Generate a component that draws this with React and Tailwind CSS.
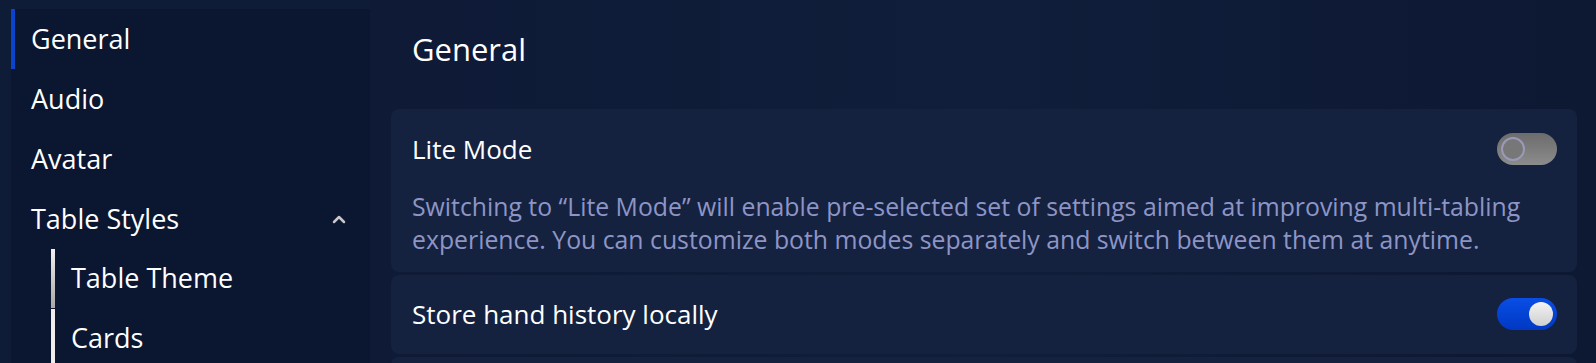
import { useState } from 'react';

const font = { fontFamily: '"Open Sans", "Noto Sans", sans-serif' };

function Toggle({ on }) {
    return (
        <div
            className={
                'relative h-[32px] w-[60px] shrink-0 rounded-full ' +
                (on ? 'bg-gradient-to-b from-[#0a4ee6] to-[#0038c2]' : 'bg-gradient-to-b from-[#6c6c6c] to-[#8c8c8c]')
            }
        >
            {on ? (
                <div className="absolute right-[4px] top-[4px] h-[24px] w-[24px] rounded-full bg-gradient-to-b from-[#f4f4f4] to-[#cfcfcf]" />
            ) : (
                <div className="absolute left-[4px] top-[4px] h-[24px] w-[24px] rounded-full border-2 border-[#9a9ab8] bg-[#777]" />
            )}
        </div>
    );
}

function NavItem({ label, active, children }) {
    return (
        <div
            className={
                'flex h-[60px] items-center border-l-4 pl-[16px] pr-[24px] text-[27px] text-white ' +
                (active ? 'border-[#0a44cc]' : 'border-transparent')
            }
        >
            <span className="flex-1">{label}</span>
            {children}
        </div>
    );
}

function SubItem({ label, fade }) {
    return (
        <div className="ml-[40px] mb-px flex h-[59px] items-center gap-[16px] text-[27px] text-white">
            <div
                className={
                    'h-full w-[4px] ' +
                    (fade ? 'bg-gradient-to-b from-[#f2f2f2] to-[#a8a8a8]' : 'bg-[#eeeeee]')
                }
            />
            {label}
        </div>
    );
}

export default function App() {
    const [lite] = useState(false);

    return (
        <div className="flex h-[363px] w-full overflow-hidden bg-[#0f1c38]" style={font}>
            {/* Sidebar */}
            <aside className="mt-[9px] ml-[11px] w-[359px] shrink-0 bg-[#0b1631]">
                <NavItem label="General" active />
                <NavItem label="Audio" />
                <NavItem label="Avatar" />
                <NavItem label="Table Styles">
                    <svg width="14" height="9" viewBox="0 0 14 9">
                        <path d="M2 7 L7 2 L12 7" fill="none" stroke="#c8c8c8" strokeWidth="2.5" strokeLinecap="round" strokeLinejoin="round" />
                    </svg>
                </NavItem>
                <SubItem label="Table Theme" fade />
                <SubItem label="Cards" />
            </aside>

            {/* Content */}
            <main className="flex-1 bg-gradient-to-r from-[#0e1a36] via-[#101e3b] to-[#0d1833] pl-[21px] pr-[19px] pt-[29px]">
                <h1 className="mb-[40px] h-[40px] pl-[21px] text-[31px] leading-[40px] text-white">General</h1>

                <div className="flex flex-col gap-[3px]">
                    <section className="rounded-[8px] bg-[#14223f] pl-[21px] pt-[24px] pb-[16px] pr-[20px]">
                        <div className="flex h-[32px] items-center justify-between">
                            <span className="text-[26px] text-white">Lite Mode</span>
                            <Toggle on={lite} />
                        </div>
                        <p className="mt-[25px] whitespace-nowrap text-[24.8px] leading-[33px] text-[#8e95c6]">
                            Switching to “Lite Mode” will enable pre-selected set of settings aimed at improving multi-tabling
                            <br />
                            experience. You can customize both modes separately and switch between them at anytime.
                        </p>
                    </section>

                    <section className="rounded-[8px] bg-[#14223f] pl-[21px] pt-[23px] pb-[24px] pr-[20px]">
                        <div className="flex h-[32px] items-center justify-between">
                            <span className="text-[26px] text-white">Store hand history locally</span>
                            <Toggle on />
                        </div>
                    </section>

                    <section className="h-[60px] rounded-[8px] bg-[#14223f]" />
                </div>
            </main>
        </div>
    );
}
